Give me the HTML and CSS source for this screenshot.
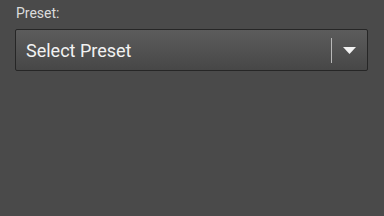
FILE: index.html
```html
<!DOCTYPE html>
<html lang="en">
<head>
    <meta charset="UTF-8">
    <title>Preset</title>
    <link rel="stylesheet" href="styles.css">
</head>
<body>
    <div class="field">
        <label class="label">Preset:</label>
        <div class="select">
            <span class="value">Select Preset</span>
            <div class="divider"></div>
            <div class="arrow">
                <svg width="13" height="7" viewBox="0 0 13 7">
                    <polygon points="0,0 13,0 6.5,7" fill="#f2f2f2"/>
                </svg>
            </div>
        </div>
    </div>
</body>
</html>
```

FILE: styles.css
```css
* {
    margin: 0;
    padding: 0;
    box-sizing: border-box;
}
html, body {
    width: 100%;
    height: 100%;
}
body {
    background: #4a4a4a;
    font-family: Roboto, "Liberation Sans", sans-serif;
}
.field {
    padding: 5px 16px 0 15px;
    display: flex;
    flex-direction: column;
}
.label {
    color: #dcdcdc;
    font-size: 14px;
    line-height: 16px;
    padding-left: 1px;
    margin-bottom: 8px;
}
.select {
    height: 42px;
    display: flex;
    align-items: center;
    border: 1px solid #262626;
    border-radius: 2px;
    background: linear-gradient(to bottom, #5c5c5c, #474747);
    padding-left: 10px;
}
.value {
    flex: 1;
    color: #f2f2f2;
    font-size: 18px;
    line-height: 20px;
    padding-top: 2px;
}
.divider {
    width: 1px;
    height: 25px;
    background: #b8b8b8;
}
.arrow {
    width: 35px;
    display: flex;
    justify-content: center;
    align-items: center;
}
.arrow svg {
    display: block;
}
```
